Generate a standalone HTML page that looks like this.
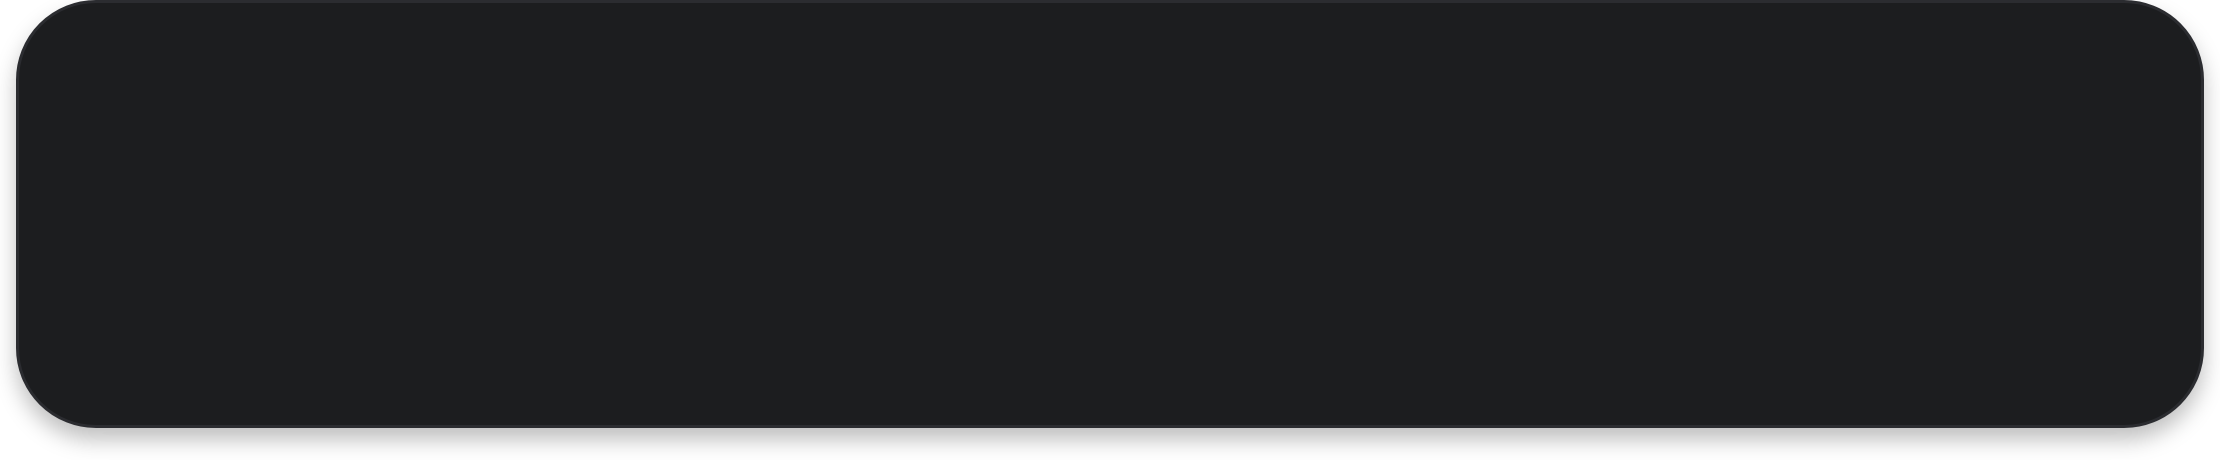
<!DOCTYPE html>
<html><head><meta charset="utf-8"><style>
html,body{margin:0;padding:0;width:2220px;height:460px;background:#fff;overflow:hidden}
.card{position:absolute;left:16px;top:0;width:2188px;height:428px;box-sizing:border-box;background:#1c1d1f;border:3px solid #2b2c30;border-radius:80px;box-shadow:0 12px 22px rgba(0,0,0,0.25)}
</style></head><body><div class="card"></div></body></html>
